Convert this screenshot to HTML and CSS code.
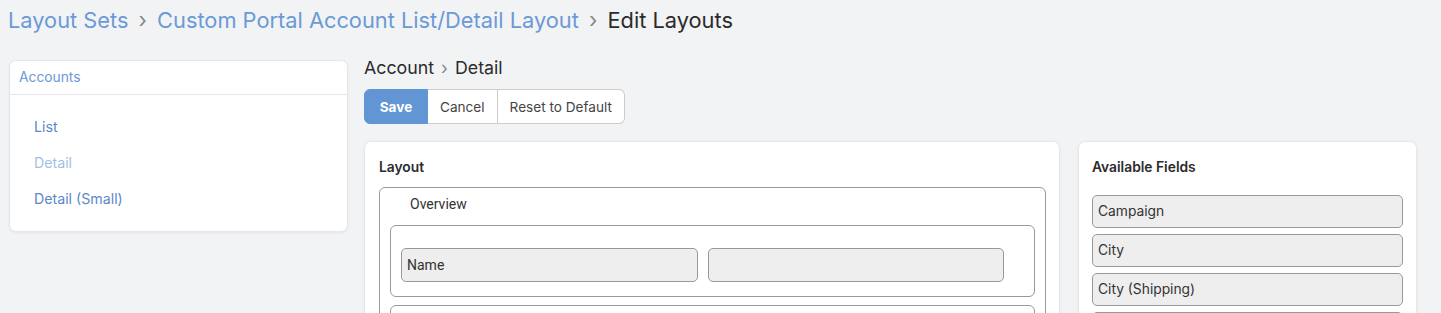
FILE: index.html
```html
<!DOCTYPE html>
<html lang="en">
<head>
    <meta charset="UTF-8">
    <title>Edit Layouts</title>
    <link rel="stylesheet" href="styles.css">
</head>
<body>

    <div class="page-header">
        <a href="#" class="crumb-link">Layout Sets</a>
        <span class="crumb-sep">&rsaquo;</span>
        <a href="#" class="crumb-link">Custom Portal Account List/Detail Layout</a>
        <span class="crumb-sep">&rsaquo;</span>
        <span class="crumb-current">Edit Layouts</span>
    </div>

    <div class="main">
        <div class="side">
            <div class="panel side-panel">
                <div class="side-head">Accounts</div>
                <ul class="side-list">
                    <li><a href="#">List</a></li>
                    <li><a href="#" class="disabled">Detail</a></li>
                    <li><a href="#">Detail (Small)</a></li>
                </ul>
            </div>
        </div>

        <div class="content">
            <div class="content-title">Account <span class="crumb-sep small">&rsaquo;</span> Detail</div>

            <div class="btn-group">
                <button type="button" class="btn btn-primary">Save</button>
                <button type="button" class="btn">Cancel</button>
                <button type="button" class="btn">Reset to Default</button>
            </div>

            <div class="panels">
                <div class="panel layout-panel">
                    <div class="panel-title">Layout</div>
                    <div class="layout-box">
                        <div class="layout-label">Overview</div>
                        <div class="row-box">
                            <div class="cell">Name</div>
                            <div class="cell"></div>
                        </div>
                        <div class="row-box"></div>
                    </div>
                </div>

                <div class="panel fields-panel">
                    <div class="panel-title">Available Fields</div>
                    <ul class="field-list">
                        <li>Campaign</li>
                        <li>City</li>
                        <li>City (Shipping)</li>
                        <li></li>
                    </ul>
                </div>
            </div>
        </div>
    </div>

</body>
</html>
```

FILE: styles.css
```css
body {
    margin: 0;
    font-family: Inter, 'Noto Sans', sans-serif;
    background-color: #f2f3f5;
    color: #333;
    overflow: hidden;
}

a {
    text-decoration: none;
}

/* Header breadcrumb */
.page-header {
    padding: 6px 8px 0;
    height: 52px;
    box-sizing: border-box;
    font-size: 21.8px;
    line-height: 28px;
}

.crumb-link {
    color: #6b9ad6;
}

.crumb-sep {
    color: #888;
    margin: 0 4px;
}

.crumb-sep.small {
    margin: 0 2px;
}

.crumb-current {
    color: #2b2b2b;
}

.main {
    display: flex;
    padding: 0 24px 0 9px;
}

.panel {
    background-color: #fff;
    border: 1px solid #e6e7ea;
    border-radius: 7px;
    box-shadow: 0 1px 3px rgba(0, 0, 0, 0.06);
}

/* Left side */
.side {
    width: 339px;
    flex: none;
    padding-top: 8px;
}

.side-head {
    height: 33px;
    line-height: 33px;
    padding-left: 9px;
    font-size: 13.8px;
    color: #6b9ad6;
    border-bottom: 1px solid #e6e7ea;
}

.side-list {
    list-style: none;
    margin: 0;
    padding: 14px 0 14px 24px;
}

.side-list li {
    line-height: 36px;
    font-size: 14.2px;
}

.side-list a {
    color: #5b88c9;
}

.side-list a.disabled {
    color: #a3bfe4;
}

/* Content */
.content {
    flex: 1;
    margin-left: 16px;
    padding-top: 6px;
}

.content-title {
    font-size: 17.8px;
    line-height: 20px;
    color: #2b2b2b;
    margin-bottom: 11px;
}

.btn-group {
    display: flex;
    height: 35px;
}

.btn {
    font-family: Inter, 'Noto Sans', sans-serif;
    font-size: 13.6px;
    color: #444;
    background-color: #fff;
    border: 1px solid #ccc;
    border-left: none;
    padding: 0 12px;
    cursor: pointer;
}

.btn:last-child {
    border-radius: 0 6px 6px 0;
}

.btn-primary {
    background-color: #6295d3;
    border: 1px solid #6295d3;
    color: #fff;
    font-weight: 700;
    border-radius: 6px 0 0 6px;
    width: 64px;
}

.panels {
    display: flex;
    gap: 18px;
    margin-top: 17px;
}

.panel-title {
    font-size: 13.8px;
    font-weight: 600;
    color: #2b2b2b;
    line-height: 18px;
}

.layout-panel {
    width: 696px;
    flex: none;
    box-sizing: border-box;
    padding: 16px 13px 20px 14px;
    border-bottom: none;
    border-radius: 7px 7px 0 0;
}

.layout-panel .panel-title {
    margin-bottom: 11px;
}

.layout-box {
    border: 1px solid #999;
    border-radius: 6px;
    padding: 0 10px 10px;
}

.layout-label {
    font-family: Roboto, sans-serif;
    font-size: 14px;
    line-height: 32px;
    margin-bottom: 5px;
    padding-left: 20px;
    color: #333;
}

.row-box {
    border: 1px solid #999;
    border-radius: 6px;
    padding: 22px 30px 14px 10px;
    display: flex;
    gap: 10px;
    margin-bottom: 8px;
    min-height: 34px;
}

.cell {
    flex: 1;
    height: 32px;
    line-height: 32px;
    background-color: #eee;
    border: 1px solid #999;
    border-radius: 5px;
    padding-left: 5px;
    font-family: Roboto, sans-serif;
    font-size: 14px;
    color: #333;
}

.fields-panel {
    width: 339px;
    flex: none;
    box-sizing: border-box;
    padding: 16px 13px 20px 13px;
    border-bottom: none;
    border-radius: 7px 7px 0 0;
}

.fields-panel .panel-title {
    margin-bottom: 19px;
}

.field-list {
    list-style: none;
    margin: 0;
    padding: 0;
}

.field-list li {
    height: 31px;
    line-height: 31px;
    background-color: #eee;
    border: 1px solid #999;
    border-radius: 5px;
    padding-left: 5px;
    margin-bottom: 6px;
    font-size: 13.8px;
    color: #333;
}
```
